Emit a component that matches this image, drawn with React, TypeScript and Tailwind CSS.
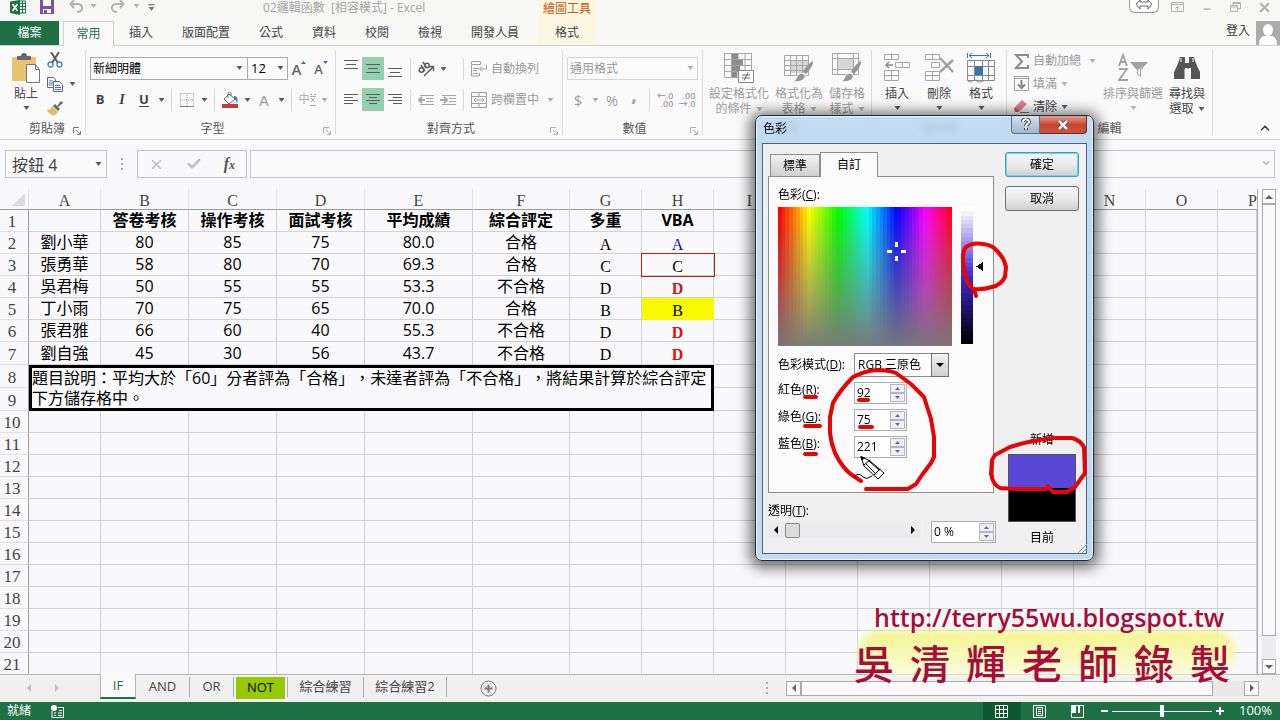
import { ReactNode, useState } from "react";
import { ChevronUp, ChevronDown, Check, X, Minus } from "lucide-react";

interface SheetRow {
    name: string;
    scores: string[];
    result: string;
    multi: string;
    vba: string;
    vbaClass: string;
}

// the last column takes whatever width is left
const columns = [
    { label: "A", width: "w-[72px]" },
    { label: "B", width: "w-[88px]" },
    { label: "C", width: "w-[88px]" },
    { label: "D", width: "w-[88px]" },
    { label: "E", width: "w-[108px]" },
    { label: "F", width: "w-[97px]" },
    { label: "G", width: "w-[72px]" },
    { label: "H", width: "w-[72px]" },
    { label: "I", width: "w-[72px]" },
    { label: "J", width: "w-[72px]" },
    { label: "K", width: "w-[72px]" },
    { label: "L", width: "w-[72px]" },
    { label: "M", width: "w-[72px]" },
    { label: "N", width: "w-[72px]" },
    { label: "O", width: "w-[72px]" },
    { label: "P", width: "" },
];

const headings = ["", "答卷考核", "操作考核", "面試考核", "平均成績", "綜合評定", "多重", "VBA"];

const rows: SheetRow[] = [
    { name: "劉小華", scores: ["80", "85", "75", "80.0"], result: "合格", multi: "A", vba: "A", vbaClass: "text-[#1a0d99]" },
    { name: "張勇華", scores: ["58", "80", "70", "69.3"], result: "合格", multi: "C", vba: "C", vbaClass: "outline outline-[#c01818]" },
    { name: "吳君梅", scores: ["50", "55", "55", "53.3"], result: "不合格", multi: "D", vba: "D", vbaClass: "font-bold text-[#d81414]" },
    { name: "丁小雨", scores: ["70", "75", "65", "70.0"], result: "合格", multi: "B", vba: "B", vbaClass: "bg-[#f8f800] border-[#f8f800]" },
    { name: "張君雅", scores: ["66", "60", "40", "55.3"], result: "不合格", multi: "D", vba: "D", vbaClass: "font-bold text-[#d81414]" },
    { name: "劉自強", scores: ["45", "30", "56", "43.7"], result: "不合格", multi: "D", vba: "D", vbaClass: "font-bold text-[#d81414]" },
];

const ribbonTabs = ["插入", "版面配置", "公式", "資料", "校閱", "檢視", "開發人員"];

function Caret({ light = false }: { light?: boolean }) {
    return (
        <svg width="7" height="4" viewBox="0 0 7 4" className={light ? "text-[#b0b0b0]" : "text-[#5a5a5a]"}>
            <path d="M0.5 0h6L3.5 4z" fill="currentColor" />
        </svg>
    );
}

function CaretButton({ label, light }: { label: string; light?: boolean }) {
    return (
        <button aria-label={label} className="flex h-[23px] w-3 items-center justify-center">
            <Caret light={light} />
        </button>
    );
}

function IconButton({ label, active = false, children }: { label: string; active?: boolean; children: ReactNode }) {
    return (
        <button
            aria-label={label}
            className={`flex h-[23px] w-[22px] shrink-0 items-center justify-center ${active ? "bg-[#94cfae]" : ""}`}
        >
            {children}
        </button>
    );
}

function Divider() {
    return <div className="mx-1 h-[22px] w-px bg-[#d8d8da]" />;
}

function Group({ label, width, launcher = "", children }: { label: string; width: string; launcher?: string; children: ReactNode }) {
    return (
        <section className={`flex shrink-0 flex-col border-r border-[#dcdcde] ${width}`}>
            <div className="h-[72px]">{children}</div>
            <div className="flex h-[14px] items-end">
                <span className="flex-1 text-center leading-3 text-[#555]">{label}</span>
                {launcher && (
                    <button aria-label={label + "設定"} className={`-ml-4 mr-1 ${launcher}`}>
                        <svg width="8" height="8" viewBox="0 0 8 8" fill="none" stroke="currentColor">
                            <path d="M0.5 6V0.5H6M3 3l4 4M7.5 4v3.500H4" />
                        </svg>
                    </button>
                )}
            </div>
        </section>
    );
}

function BigButton({ icon, lines, light = false, dropdown = true }: { icon: ReactNode; lines: string[]; light?: boolean; dropdown?: boolean }) {
    return (
        <button className={`flex min-w-[42px] flex-col items-center px-[3px] ${light ? "text-[#9a9a9a]" : "text-[#444]"}`}>
            <span className="flex h-[36px] items-center">{icon}</span>
            {lines.map((line, i) => (
                <span key={line} className="flex h-[15px] items-center gap-1 whitespace-nowrap">
                    {line}
                    {i === 1 && dropdown && <Caret light={light} />}
                </span>
            ))}
            {lines.length === 1 && (
                <span className="flex h-[14px] items-center">
                    <Caret light={light} />
                </span>
            )}
        </button>
    );
}

function AlignIcon({ lines }: { lines: [number, number, number][] }) {
    return (
        <svg width="14" height="17" viewBox="0 0 14 17" stroke="#5c5c5c">
            {lines.map(([x1, x2, y]) => (
                <path key={y} d={`M${x1} ${y}.5H${x2}`} />
            ))}
        </svg>
    );
}

function TableIcon({ children }: { children: ReactNode }) {
    return (
        <svg width="30" height="30" viewBox="0 0 30 30" fill="none" stroke="#a6a6a6">
            {children}
        </svg>
    );
}

function Brush() {
    return (
        <g stroke="none" fill="#969696">
            <path d="M29 8c1 3-4 10-7 13l-3-2c2-4 6-9 10-11z" />
            <path d="M18 20l3 2c1 4-3 7-12 7 4-2 3-8 9-9z" stroke="#fafafa" />
        </g>
    );
}

function Header() {
    return (
        <header className="border-b border-[#d0d0d0] bg-[#f7f7f5] text-[#444]">
            <div className="flex h-[21px]">
                <div className="flex w-[263px] shrink-0 items-start">
                    <svg className="ml-[10px]" width="16" height="15" viewBox="0 0 16 15">
                        <path d="M9 1h6.500v12H9" fill="#fff" stroke="#1f7244" />
                        <path d="M10 3.500h5M10 6.500h5M10 9.500h5M12.500 1v12" stroke="#1f7244" />
                        <path d="M0 1.500L10 0v15L0 13z" fill="#1f7244" />
                        <path d="M2.500 4l5 7M7.500 4l-5 7" stroke="#fff" strokeWidth="1.600" />
                    </svg>
                    <button aria-label="儲存檔案" className="ml-[14px]">
                        <svg width="14" height="14" viewBox="0 0 14 14">
                            <path d="M0 0h14v14H0z" fill="#8250a0" />
                            <path d="M3 0h8v6H3zM3 9h8v4H3z" fill="#fff" />
                            <path d="M4 10h3v3H4z" fill="#8250a0" />
                        </svg>
                    </button>
                    <button aria-label="復原" className="ml-[15px]">
                        <svg width="15" height="13" viewBox="0 0 15 13" fill="none" stroke="#b3b3b3" strokeWidth="2">
                            <path d="M5 0L1.500 4 5 8M2 4h7c6 1 5 8-1 8" />
                        </svg>
                    </button>
                    <span className="ml-[6px] mt-1"><Caret light /></span>
                    <button aria-label="取消復原" className="ml-[13px]">
                        <svg width="15" height="13" viewBox="0 0 15 13" fill="none" stroke="#b3b3b3" strokeWidth="2">
                            <path d="M10 0l3.500 4L10 8M13 4H6C0 5 1 12 7 12" />
                        </svg>
                    </button>
                    <span className="ml-2 mt-1"><Caret light /></span>
                    <button aria-label="自訂快速存取工具列" className="ml-2 mt-1">
                        <svg width="7" height="7" viewBox="0 0 7 7" fill="#777">
                            <path d="M0.500 0h6v1.200h-6zM0.500 3h6l-3 4z" />
                        </svg>
                    </button>
                </div>
                <h1 className="w-[275px] shrink-0 whitespace-pre text-xs leading-4 text-[#a5a5a5]">02邏輯函數  [相容模式] - Excel</h1>
                <div className="w-[58px] shrink-0 bg-[#faf7e0] text-center leading-[18px] text-[#c55a11]">繪圖工具</div>
                <div className="ml-auto flex items-start text-[#b3b3b3]">
                    <button aria-label="遠端連線" className="mr-3 flex h-[13px] w-[30px] items-start justify-center rounded-b-md border border-t-0 border-[#999] bg-white">
                        <svg width="18" height="10" viewBox="0 0 18 10" fill="none" stroke="#666">
                            <path d="M5 0L1 4l4 5V6h8v3l4-5-4-4v2H5z" />
                        </svg>
                    </button>
                    <button aria-label="功能區顯示選項" className="mr-[18px] mt-[2px]">
                        <svg width="13" height="10" viewBox="0 0 13 10" fill="none" stroke="currentColor">
                            <path d="M0.500 0.500h12v9H0.500zM0.500 2.500h12M6.500 9V4.500M4.500 6.500l2-2 2 2" />
                        </svg>
                    </button>
                    <button aria-label="最小化" className="mr-[18px] mt-1"><Minus size={10} strokeWidth={4} /></button>
                    <button aria-label="還原視窗" className="mr-4 mt-[2px]">
                        <svg width="11" height="10" viewBox="0 0 11 10" fill="none" stroke="currentColor">
                            <path d="M0.500 3.500h7v6h-7zM0.500 5h7M3 3V0.500h7.500v6H8M3 1.500h7" />
                        </svg>
                    </button>
                    <button aria-label="關閉" className="mr-2 mt-0"><X size={15} strokeWidth={3.500} /></button>
                </div>
            </div>
            <div className="flex h-6 items-stretch">
                <button className="w-[59px] shrink-0 bg-[#1e7145] text-white">檔案</button>
                <button className="-mb-px ml-1 w-[51px] shrink-0 border border-b-0 border-[#d0d0d0] bg-[#fafafb] text-[#1e7145]">常用</button>
                <nav className="flex w-[424px] shrink-0 gap-[29px] pl-[15px]">
                    {ribbonTabs.map((tab) => (
                        <button key={tab} className="whitespace-nowrap">{tab}</button>
                    ))}
                </nav>
                <button className="w-[58px] shrink-0 bg-[#faf7e0]">格式</button>
                <div className="ml-auto flex items-center gap-[6px]">
                    <a href="#signin" className="mb-1">登入</a>
                    <svg width="24" height="24" viewBox="0 0 24 24">
                        <path d="M0 0h24v24H0z" fill="#acacac" />
                        <ellipse cx="12" cy="9" rx="5" ry="6" fill="#fff" />
                        <path d="M3 24c0-8 4-9 6-9h6c2 0 6 1 6 9z" fill="#fff" />
                    </svg>
                </div>
            </div>
        </header>
    );
}

function Ribbon() {
    return (
        <div className="flex h-[94px] overflow-hidden border-b border-[#d0d0d0] bg-[#fafafb] py-1 text-[#444]">
            <Group label="剪貼簿" width="w-[86px] pl-[5px]" launcher="text-[#777]">
                <div className="flex">
                    <BigButton
                        lines={["貼上"]}
                        icon={
                            <svg width="30" height="30" viewBox="0 0 30 30">
                                <path d="M1 4h24v24H1z" fill="#e8c374" />
                                <path d="M6 3h4c0-4 6-4 6 0h4v4H6z" fill="#66666a" />
                                <path d="M15.500 11.500h9l4 5v13h-13z" fill="#fff" stroke="#777" />
                                <path d="M24.500 11.500v5h4" fill="none" stroke="#777" />
                            </svg>
                        }
                    />
                    <div className="flex flex-col gap-2 pt-[2px]">
                        <button aria-label="剪下" className="h-4 w-4">
                            <svg width="16" height="16" viewBox="0 0 16 16" fill="none">
                                <path d="M4 0l7 11M12 0L5 11" stroke="#5c5c5c" strokeWidth="2" />
                                <circle cx="3.500" cy="12.500" r="2.500" stroke="#4a7cb5" strokeWidth="1.300" />
                                <circle cx="12.500" cy="12.500" r="2.500" stroke="#4a7cb5" strokeWidth="1.300" />
                            </svg>
                        </button>
                        <button aria-label="複製" className="flex h-4 items-center gap-[6px]">
                            <svg width="16" height="15" viewBox="0 0 16 15" fill="#fff" stroke="#666">
                                <path d="M0.500 0.500h6l2 2v8h-8z" />
                                <path d="M2 4h4M2 6h4M2 8h4" stroke="#4a7cb5" />
                                <path d="M6.500 4.500h6l3 3v7h-9z" />
                                <path d="M8 8.500h5M8 10.500h6M8 12.500h6" stroke="#4a7cb5" />
                            </svg>
                            <Caret />
                        </button>
                        <button aria-label="複製格式" className="h-4 w-4">
                            <svg width="16" height="15" viewBox="0 0 16 15">
                                <path d="M14 0l2 2-5 4-1-1z" fill="#666" />
                                <path d="M8 3l5 5-2 2-5-5z" fill="#666" />
                                <path d="M5 5l6 6c-2 3-5 4-6 3-2-1-5-4-5-5 2 0 4-1 5-4z" fill="#e3b868" />
                            </svg>
                        </button>
                    </div>
                </div>
            </Group>

            <Group label="字型" width="w-[250px]" launcher="text-[#b0b0b0]">
                <div className="flex pl-1 pt-[7px]">
                    <label className="relative block w-[158px]">
                        <select aria-label="字型" className="h-[23px] w-full appearance-none border border-[#ababab] bg-[#fcfcfd] pl-[2px] text-xs text-black">
                            <option>新細明體</option>
                        </select>
                        <span className="pointer-events-none absolute right-[5px] top-[9px]"><Caret /></span>
                    </label>
                    <label className="relative -ml-px block w-[41px]">
                        <select aria-label="字型大小" className="h-[23px] w-full appearance-none border border-[#ababab] bg-[#fcfcfd] pl-[3px] text-[13px] text-black">
                            <option>12</option>
                        </select>
                        <span className="pointer-events-none absolute right-1 top-[9px]"><Caret /></span>
                    </label>
                    <IconButton label="放大字型">
                        <span className="text-[15px] font-semibold leading-4 text-[#666]">A</span>
                        <svg className="mb-3" width="5" height="3" viewBox="0 0 5 3"><path d="M0 3h5L2.500 0z" fill="#3a74b0" /></svg>
                    </IconButton>
                    <IconButton label="縮小字型">
                        <span className="text-[13px] font-semibold leading-4 text-[#666]">A</span>
                        <svg className="mb-3" width="5" height="3" viewBox="0 0 5 3"><path d="M0 0h5L2.500 3z" fill="#3a74b0" /></svg>
                    </IconButton>
                </div>
                <div className="flex items-center pl-[3px] pt-2">
                    <IconButton label="粗體"><b className="text-[13px]">B</b></IconButton>
                    <IconButton label="斜體"><i className="font-['Liberation_Serif',serif] text-sm font-bold">I</i></IconButton>
                    <IconButton label="底線"><span className="text-[13px] font-bold underline underline-offset-2">U</span></IconButton>
                    <CaretButton label="底線樣式" />
                    <Divider />
                    <IconButton label="框線">
                        <svg width="14" height="14" viewBox="0 0 14 14" fill="none" stroke="#a0a0a0">
                            <path d="M0.500 0.500h13v13M0.500 0.500v13M7 0v13M0 7h14" strokeDasharray="1 1" />
                            <path d="M0 13.500h14" stroke="#888" />
                        </svg>
                    </IconButton>
                    <CaretButton label="框線樣式" />
                    <Divider />
                    <IconButton label="填滿色彩">
                        <svg width="17" height="16" viewBox="0 0 17 16">
                            <path d="M7 2l6 5-6 5-5-5z" fill="#fff" stroke="#666" />
                            <path d="M6 6V1.500C6-.5 9-.5 9 1.500V4" fill="none" stroke="#666" />
                            <path d="M12 4c4 0 4 4 3 7-1-2-1-4-3-4z" fill="#3a74b0" />
                            <path d="M0 12h16v4H0z" fill="#c33c3c" />
                        </svg>
                    </IconButton>
                    <CaretButton label="填滿色彩選項" />
                    <IconButton label="字型色彩"><span className="text-[15px] font-semibold leading-4 text-[#a8a8a8]">A</span></IconButton>
                    <CaretButton label="字型色彩選項" />
                    <Divider />
                    <IconButton label="顯示注音標示欄位">
                        <span className="text-[11px] text-[#a8a8a8]">中</span>
                        <svg width="6" height="13" viewBox="0 0 6 13" fill="none" stroke="#a8a8a8">
                            <path d="M0 1.500h2M4 1.500h2M0 3.500h6M1 5l4 4M5 5L1 9M0 12.500h6" />
                        </svg>
                    </IconButton>
                    <CaretButton label="注音選項" light />
                </div>
            </Group>

            <Group label="對齊方式" width="w-[227px]" launcher="text-[#b0b0b0]">
                <div className="flex items-center pl-1 pt-[7px]">
                    <IconButton label="靠上對齊"><AlignIcon lines={[[0, 14, 0], [2, 12, 4], [0, 14, 8]]} /></IconButton>
                    <IconButton label="置中對齊" active><AlignIcon lines={[[0, 14, 4], [2, 12, 8], [0, 14, 12]]} /></IconButton>
                    <IconButton label="靠下對齊"><AlignIcon lines={[[0, 14, 8], [2, 12, 12], [0, 14, 16]]} /></IconButton>
                    <Divider />
                    <div className="flex w-11">
                        <IconButton label="方向">
                            <svg width="17" height="16" viewBox="0 0 17 16" fill="none" stroke="#5c5c5c" strokeWidth="1.500">
                                <path d="M6 15L15 6M15.500 10V5.500H11" />
                                <circle cx="3.500" cy="9" r="2.200" />
                                <circle cx="9" cy="4.500" r="2.200" />
                                <path d="M3 4l4 6M5 1l3 5" />
                            </svg>
                        </IconButton>
                        <CaretButton label="方向選項" />
                    </div>
                    <Divider />
                    <button className="flex items-center gap-1 pl-[3px] text-[#9a9a9a]">
                        <svg width="16" height="16" viewBox="0 0 16 16" fill="none" stroke="#a0a0a0">
                            <path d="M0.500 0.500h9v3h-9zM0.500 5v10h8v-3M2 7.500h6M2 9.500h4M2 12.500h5M15.500 4v4H9M11 5.500L8.500 8l2.500 2.500M0.500 4v2" />
                        </svg>
                        自動換列
                    </button>
                </div>
                <div className="flex items-center pl-1 pt-2">
                    <IconButton label="靠左對齊"><AlignIcon lines={[[0, 14, 3], [0, 9, 6], [0, 14, 9], [0, 9, 12]]} /></IconButton>
                    <IconButton label="置中" active><AlignIcon lines={[[0, 14, 3], [3, 11, 6], [0, 14, 9], [3, 11, 12]]} /></IconButton>
                    <IconButton label="靠右對齊"><AlignIcon lines={[[0, 14, 3], [5, 14, 6], [0, 14, 9], [5, 14, 12]]} /></IconButton>
                    <Divider />
                    <IconButton label="減少縮排">
                        <svg width="16" height="12" viewBox="0 0 16 12" fill="none" stroke="#a8a8a8">
                            <path d="M2 1.500h14M8 4.500h7M8 7.500h7M2 10.500h14" />
                            <path d="M4 3L1 6l3 3M1 6h6" strokeWidth="2" />
                        </svg>
                    </IconButton>
                    <IconButton label="增加縮排">
                        <svg width="16" height="12" viewBox="0 0 16 12" fill="none" stroke="#a8a8a8">
                            <path d="M2 1.500h14M9 4.500h7M9 7.500h7M2 10.500h14" />
                            <path d="M4 3l3 3-3 3M0 6h7" strokeWidth="2" />
                        </svg>
                    </IconButton>
                    <Divider />
                    <button className="flex items-center gap-1 pl-[3px] text-[#9a9a9a]">
                        <svg width="16" height="16" viewBox="0 0 16 16" fill="none" stroke="#a0a0a0">
                            <path d="M0.500 0.500h15v15h-15zM0.500 4.500h15M0.500 11.500h15M8 0v4M8 12v4M3 8h10M5 6L3 8l2 2M11 6l2 2-2 2" />
                        </svg>
                        跨欄置中
                    </button>
                    <span className="ml-2"><Caret light /></span>
                </div>
            </Group>

            <Group label="數值" width="w-[140px]" launcher="text-[#b0b0b0]">
                <label className="relative mx-1 block pt-[7px]">
                    <select aria-label="數值格式" className="h-[23px] w-full appearance-none border border-[#d4d4d6] bg-[#fcfcfd] pl-[2px] text-xs text-[#9a9a9a]">
                        <option>通用格式</option>
                    </select>
                    <span className="pointer-events-none absolute right-1 top-4"><Caret light /></span>
                </label>
                <div className="flex items-center pl-1 pt-2 text-[#a0a0a0]">
                    <IconButton label="會計數字格式"><span className="text-[15px] leading-4">$</span></IconButton>
                    <CaretButton label="貨幣選項" light />
                    <IconButton label="百分比樣式"><span className="text-[15px] leading-4">%</span></IconButton>
                    <IconButton label="千分位樣式"><span className="pb-3 text-xl font-bold leading-4">,</span></IconButton>
                    <Divider />
                    <IconButton label="增加小數位數">
                        <span className="text-right text-[9px] font-semibold leading-2">←.0<br />.00</span>
                    </IconButton>
                    <IconButton label="減少小數位數">
                        <span className="text-right text-[9px] font-semibold leading-2">.00<br />→.0</span>
                    </IconButton>
                </div>
            </Group>

            <Group label="樣式" width="w-[169px]">
                <div className="flex pl-[3px]">
                    <BigButton
                        light
                        lines={["設定格式化", "的條件"]}
                        icon={
                            <TableIcon>
                                <path d="M0.500 0.500h27v24h-27zM0.500 6.500h27M0.500 12.500h27M0.500 18.500h27M7.500 0v24M14 0v24M21 0v24" />
                                <path d="M8 1h6v5H8zM8 7h11v5H8zM8 13h8v5H8zM8 19h5v5H8z" fill="#8c8c8c" stroke="none" />
                                <path d="M14.500 17.500h15v12h-15z" fill="#fff" stroke="#888" />
                                <path d="M18 22h8M18 25h8M24 19.500l-4 8" stroke="#666" />
                            </TableIcon>
                        }
                    />
                    <BigButton
                        light
                        lines={["格式化為", "表格"]}
                        icon={
                            <TableIcon>
                                <path d="M7 8h18v12H7z" fill="#d6d6d6" stroke="none" />
                                <path d="M0.500 2.500h24v20h-24zM0.500 7.500h24M0.500 12.500h24M0.500 17.500h24M6.500 2v20M12.500 2v20M18.500 2v20" />
                                <Brush />
                            </TableIcon>
                        }
                    />
                    <BigButton
                        light
                        lines={["儲存格", "樣式"]}
                        icon={
                            <TableIcon>
                                <path d="M0.500 0.500h26v21h-26zM0.500 5.500h26M0.500 16.500h26M5.500 0v21M21.500 0v21" />
                                <path d="M6 6h15v10H6z" fill="#d6d6d6" stroke="none" />
                                <Brush />
                            </TableIcon>
                        }
                    />
                </div>
            </Group>

            <Group label="儲存格" width="w-[135px]">
                <div className="flex pl-1">
                    <BigButton
                        lines={["插入"]}
                        icon={
                            <TableIcon>
                                <path d="M2.500 1.500h14v5h-14zM9.500 1v5M13.500 9.500h14v5h-14zM20.500 9v5M2.500 17.500h14v10h-14zM2.500 22.500h14M9.500 17v10" />
                                <path d="M4 12h7M7 9l-3 3 3 3" stroke="#888" strokeWidth="1.500" />
                            </TableIcon>
                        }
                    />
                    <BigButton
                        lines={["刪除"]}
                        icon={
                            <TableIcon>
                                <path d="M1.500 1.500h14v5h-14zM8.500 1v5M7.500 9.500h8v5h-8zM1.500 18.500h14v9h-14zM1.500 22.500h14M8.500 18v9" />
                                <path d="M16 5l13 14M29 7L16 19" stroke="#a0a0a0" strokeWidth="2.500" />
                            </TableIcon>
                        }
                    />
                    <BigButton
                        lines={["格式"]}
                        icon={
                            <TableIcon>
                                <path d="M1.500 0v5M24.500 0v5M3 2.500h20M6 0L3 2.500 6 5M20 0l3 2.500L20 5" stroke="#3a74b0" />
                                <path d="M1.500 7.500h27v20h-27zM1.500 13.500h27M1.500 22.500h27M8.500 7v21M16.500 7v21M22.500 7v21" stroke="#888" />
                                <path d="M9 13h8v9H9z" fill="#3a74b0" stroke="none" />
                                <path d="M2 28c4 3 5-3 9 0s5-1 7 0" stroke="#888" />
                            </TableIcon>
                        }
                    />
                </div>
            </Group>

            <Group label="編輯" width="w-[206px]">
                <div className="flex">
                    <div className="flex w-[93px] flex-col pl-[7px]">
                        <button className="flex h-[22px] items-center gap-1 whitespace-nowrap text-[#9a9a9a]">
                            <svg width="15" height="15" viewBox="0 0 15 15" fill="none" stroke="#8c8c8c" strokeWidth="2">
                                <path d="M14 4V1H2l6 6.500L2 14h12v-3" />
                            </svg>
                            自動加總
                            <span className="ml-1"><Caret light /></span>
                        </button>
                        <button className="flex h-[23px] items-center gap-1 text-[#9a9a9a]">
                            <svg width="15" height="15" viewBox="0 0 15 15" fill="none" stroke="#a0a0a0">
                                <path d="M0.500 0.500h14v14H0.500zM0.500 2.500h14" />
                                <path d="M7.500 4v8M4 8.500L7.500 12 11 8.500" stroke="#888" strokeWidth="2" />
                            </svg>
                            填滿
                            <Caret light />
                        </button>
                        <button className="flex h-[23px] items-center gap-1">
                            <svg width="15" height="13" viewBox="0 0 15 13">
                                <path d="M8 0l5 4-7 7-5-4z" fill="#dd7f92" />
                                <path d="M1 7l5 4-2 1H1L0 9z" fill="#c9556e" />
                                <path d="M6 12.500h9" stroke="#777" />
                            </svg>
                            清除
                            <Caret />
                        </button>
                    </div>
                    <BigButton
                        light
                        lines={["排序與篩選"]}
                        icon={
                            <svg width="30" height="30" viewBox="0 0 30 30" fill="none" stroke="#a0a0a0" strokeWidth="1.800">
                                <path d="M1 13L5 2l4 11M2.500 9h5M1 16h8L1 27h9" />
                                <path d="M12 9h18l-7 8v7l-4-3v-4z" fill="#a0a0a0" stroke="none" />
                                <path d="M20 17v4l2 1v-6l4-4" fill="#fff" stroke="none" />
                            </svg>
                        }
                    />
                    <BigButton
                        lines={["尋找與", "選取"]}
                        icon={
                            <svg width="26" height="26" viewBox="0 0 26 26" fill="#555">
                                <path d="M6 2h5v6h4V2h5l1 4 3 7 2 4v7h-9V13h-2v11h-2V13H11v11H0v-7l2-4 3-7z" />
                                <path d="M11 14h4v11h-4zM7 3v4M19 3v4" fill="#fafafb" stroke="#fafafb" />
                            </svg>
                        }
                    />
                </div>
            </Group>
            <button aria-label="摺疊功能區" className="ml-auto mr-2 mt-auto"><ChevronUp size={14} strokeWidth={3} /></button>
        </div>
    );
}

function FormulaBar() {
    return (
        <div className="flex bg-[#f9f9fb] pb-[11px] pl-[5px] pr-[5px] pt-[10px]">
            <label className="relative block w-[102px] shrink-0">
                <input aria-label="名稱方塊" defaultValue="按鈕 4" className="h-7 w-full border border-[#c4c4c6] bg-[#fafafb] pl-[6px] text-base text-[#444] outline-none" />
                <span className="pointer-events-none absolute right-[5px] top-3"><Caret /></span>
            </label>
            <div className="flex w-[30px] shrink-0 flex-col items-center justify-center gap-[3px]">
                <span className="size-[2px] bg-[#aaa]" />
                <span className="size-[2px] bg-[#aaa]" />
                <span className="size-[2px] bg-[#aaa]" />
            </div>
            <div className="flex h-7 w-[110px] shrink-0 items-center justify-around border border-[#c4c4c6] text-[#bbb]">
                <button aria-label="取消輸入"><X size={15} strokeWidth={2.500} /></button>
                <button aria-label="輸入"><Check size={16} strokeWidth={3.500} /></button>
                <button aria-label="插入函數" className="font-['Liberation_Serif',serif] text-base font-bold italic leading-4 text-[#555]">
                    f<span className="text-xs">x</span>
                </button>
            </div>
            <label className="relative ml-[3px] block flex-1">
                <input aria-label="資料編輯列" className="h-7 w-full border border-[#c4c4c6] bg-[#fafafb] pl-2 outline-none" />
                <ChevronDown size={10} strokeWidth={4} className="pointer-events-none absolute right-1 top-2 text-[#bbb]" />
            </label>
        </div>
    );
}

const rowHead = "border-r border-b border-r-[#9c9c9c] border-b-[#e0e0e2] p-0 pr-1 pt-[2px] text-center align-middle font-['Liberation_Serif',serif] text-[17px] font-normal leading-[17px] text-[#444]";
const cell = "border-r border-b border-[#d0d0d4] p-0 pb-px text-center text-base leading-5 text-black";
const serifCell = "border-r border-b border-[#d0d0d4] p-0 pt-1 text-center font-['Liberation_Serif',serif] text-base leading-4";

function EmptyCells({ from }: { from: number }) {
    return (
        <>
            {columns.slice(from).map((c) => (
                <td key={c.label} className="border-b border-r border-[#d0d0d4] p-0" />
            ))}
        </>
    );
}

function Sheet() {
    return (
        <table className="w-full min-w-[1256px] table-fixed border-separate border-spacing-0">
            <colgroup>
                <col className="w-[29px]" />
                {columns.map((c) => (
                    <col key={c.label} className={c.width} />
                ))}
            </colgroup>
            <thead>
                <tr className="h-[21px]">
                    <th className="border-b border-r border-[#e0e0e2] border-b-[#9c9c9c] p-0">
                        <svg className="ml-3" width="13" height="13" viewBox="0 0 13 13"><path d="M13 0v13H0z" fill="#dcdcdc" /></svg>
                    </th>
                    {columns.map((c) => (
                        <th key={c.label} className="border-b border-r border-[#e0e0e2] border-b-[#9c9c9c] p-0 pt-1 text-center font-['Liberation_Serif',serif] text-base font-normal leading-4 text-[#444] last:border-r-0 last:text-right">
                            {c.label}
                        </th>
                    ))}
                </tr>
            </thead>
            <tbody>
                <tr className="h-[22px]">
                    <th className={rowHead}>1</th>
                    {headings.map((h, i) => (
                        <td key={i} className={`${cell} font-bold`}>{h}</td>
                    ))}
                    <EmptyCells from={8} />
                </tr>
                {rows.map((row, i) => (
                    <tr key={row.name} className={i === 5 ? "h-[23px]" : "h-[22px]"}>
                        <th className={rowHead}>{i + 2}</th>
                        <td className={cell}>{row.name}</td>
                        {row.scores.map((s, j) => (
                            <td key={j} className={cell}>{s}</td>
                        ))}
                        <td className={cell}>{row.result}</td>
                        <td className={serifCell}>{row.multi}</td>
                        <td className={`${serifCell} ${row.vbaClass}`}>{row.vba}</td>
                        <EmptyCells from={8} />
                    </tr>
                ))}
                <tr className="h-[23px]">
                    <th className={rowHead}>8</th>
                    <td colSpan={8} rowSpan={2} className="border-[3px] border-black p-0 align-top text-base leading-5 text-black [text-spacing-trim:space-all]">
                        題目說明：平均大於「60」分者評為「合格」，未達者評為「不合格」，將結果計算於綜合評定下方儲存格中。
                    </td>
                    <EmptyCells from={8} />
                </tr>
                <tr className="h-[23px]">
                    <th className={rowHead}>9</th>
                    <EmptyCells from={8} />
                </tr>
                {Array.from({ length: 12 }, (_, i) => (
                    <tr key={i} className="h-[22px]">
                        <th className={rowHead}>{i + 10}</th>
                        <EmptyCells from={0} />
                    </tr>
                ))}
            </tbody>
        </table>
    );
}

function Arrow({ direction }: { direction: "up" | "down" | "left" | "right" }) {
    const paths = {
        up: "M0 6h8L4 2z",
        down: "M0 2h8L4 6z",
        left: "M6 0v8L2 4z",
        right: "M2 0v8l4-4z",
    };
    return (
        <svg width="8" height="8" viewBox="0 0 8 8" fill="currentColor"><path d={paths[direction]} /></svg>
    );
}

function SheetTabs() {
    return (
        <div className="flex h-7 items-start border-t border-[#b4b4b4] bg-[#f0f0f0] text-[13px] text-[#444]">
            <div className="flex h-[26px] w-[100px] shrink-0 items-center pl-[25px] text-[#bbb]">
                <button aria-label="上一張工作表"><Arrow direction="left" /></button>
                <button aria-label="下一張工作表" className="ml-5"><Arrow direction="right" /></button>
            </div>
            <button className="-mt-px h-[25px] w-9 shrink-0 border-x border-b-2 border-x-[#b4b4b4] border-b-[#1e7145] bg-[#fafafb] text-[#1e7145]">IF</button>
            <button className="mt-[2px] h-5 w-[54px] shrink-0 border-r border-[#aaa]">AND</button>
            <button className="mt-[2px] h-5 w-11 shrink-0 border-r border-[#aaa]">OR</button>
            <button className="mx-[2px] mt-[2px] h-[22px] w-[49px] shrink-0 bg-[#98c800] text-black">NOT</button>
            <button className="mt-[2px] h-5 w-[77px] shrink-0 border-x border-[#aaa] text-[13px]">綜合練習</button>
            <button className="mt-[2px] h-5 w-[83px] shrink-0 border-r border-[#aaa] text-[13px]">綜合練習2</button>
            <button aria-label="新增工作表" className="ml-[33px] mt-[5px]">
                <svg width="17" height="17" viewBox="0 0 17 17" fill="none" stroke="#777">
                    <circle cx="8.500" cy="8.500" r="7.500" />
                    <path d="M8.500 4.500v8M4.500 8.500h8" strokeWidth="2" />
                </svg>
            </button>
            <div className="ml-auto mr-[21px] flex h-[26px] w-[493px] shrink items-center">
                <div className="flex w-5 shrink-0 flex-col gap-[3px]">
                    <span className="size-[2px] bg-[#aaa]" />
                    <span className="size-[2px] bg-[#aaa]" />
                    <span className="size-[2px] bg-[#aaa]" />
                </div>
                <button aria-label="向左捲動" className="flex h-[15px] w-[15px] items-center justify-center border border-[#aaa] bg-[#fafafa] text-[#666]"><Arrow direction="left" /></button>
                <div className="flex h-[15px] flex-1 bg-[#e8e8e8]">
                    <div className="w-[93%] border border-[#aaa] bg-[#fafafb]" />
                </div>
                <button aria-label="向右捲動" className="flex h-[15px] w-[15px] items-center justify-center border border-[#aaa] bg-[#fafafa] text-[#666]"><Arrow direction="right" /></button>
            </div>
        </div>
    );
}

function StatusBar() {
    return (
        <footer className="flex h-[18px] items-center bg-[#1e7145] text-xs text-white">
            <span className="ml-[7px]">就緒</span>
            <svg className="ml-5" width="13" height="13" viewBox="0 0 13 13" fill="none" stroke="#fff">
                <path d="M1 6v6.500h11.500v-10H7M3 8h2M7 8h4M3 10.500h2M7 10.500h4M8 5.500h3" />
                <circle cx="3" cy="3" r="3" fill="#fff" stroke="none" />
            </svg>
            <div className="ml-auto flex h-full items-center">
                <button aria-label="標準模式" className="flex h-full w-[38px] items-center justify-center bg-[#0d5a32]">
                    <svg width="13" height="13" viewBox="0 0 13 13" fill="none" stroke="#fff"><path d="M0.500 0.500h12v12h-12zM4.500 0v13M8.500 0v13M0 4.500h13M0 8.500h13" /></svg>
                </button>
                <button aria-label="整頁模式" className="flex w-[38px] justify-center">
                    <svg width="13" height="13" viewBox="0 0 13 13" fill="none" stroke="#fff"><path d="M0.500 0.500h12v12h-12zM3.500 2.500h6v8h-6zM5 4.500h3M5 6.500h3M5 8.500h3" /></svg>
                </button>
                <button aria-label="分頁預覽" className="flex w-[38px] justify-center">
                    <svg width="13" height="13" viewBox="0 0 13 13" fill="none" stroke="#fff"><path d="M0.500 0.500h12v12h-12z" /><path d="M1 1h4v7H1zM7 1h2v7H7z" fill="#fff" stroke="none" /></svg>
                </button>
                <button aria-label="縮小" className="ml-1 h-[2px] w-[7px] bg-white" />
                <input
                    aria-label="顯示比例"
                    type="range"
                    defaultValue={50}
                    className="mx-1 h-3 w-[100px] appearance-none bg-[linear-gradient(#fff,#fff)] bg-[length:100%_1px] bg-center bg-no-repeat [&::-webkit-slider-thumb]:h-3 [&::-webkit-slider-thumb]:w-1 [&::-webkit-slider-thumb]:appearance-none [&::-webkit-slider-thumb]:bg-white"
                />
                <button aria-label="放大">
                    <svg width="8" height="8" viewBox="0 0 8 8" stroke="#fff" strokeWidth="2"><path d="M4 0v8M0 4h8" /></svg>
                </button>
                <span className="ml-[15px] mr-2 text-[13px]">100%</span>
            </div>
        </footer>
    );
}

function Spinner({ id, value, onChange, className }: { id: string; value: string; onChange: (v: string) => void; className: string }) {
    const step = (by: number) => onChange(value.replace(/\d+/, (n) => String(Math.max(0, Number(n) + by))));
    return (
        <div className={`flex h-[22px] border border-[#aaaeb4] bg-white p-px ${className}`}>
            <input id={id} value={value} onChange={(e) => onChange(e.target.value)} className="min-w-0 flex-1 bg-transparent pl-px text-xs text-black outline-none" />
            <div className="flex w-[15px] flex-col">
                <button aria-label="增加" onClick={() => step(1)} className="flex flex-1 items-center justify-center border border-[#b4b6bc] bg-[#f0f0f2]">
                    <svg width="5" height="3" viewBox="0 0 5 3"><path d="M0 3h5L2.500 0z" fill="#6068a8" /></svg>
                </button>
                <button aria-label="減少" onClick={() => step(-1)} className="flex flex-1 items-center justify-center border border-[#b4b6bc] bg-[#f0f0f2]">
                    <svg width="5" height="3" viewBox="0 0 5 3"><path d="M0 0h5L2.500 3z" fill="#6068a8" /></svg>
                </button>
            </div>
        </div>
    );
}

function ColorMap() {
    const bands = 48;
    return (
        <svg width="174" height="139" viewBox="0 0 174 139" shapeRendering="crispEdges">
            <defs>
                <linearGradient id="fade" x1="0" y1="0" x2="0" y2="1">
                    <stop offset="0" stopColor="#808080" stopOpacity="0" />
                    <stop offset="1" stopColor="#787878" stopOpacity="0.970" />
                </linearGradient>
            </defs>
            {Array.from({ length: bands }, (_, i) => (
                <rect key={i} x={(i * 174) / bands} width={174 / bands + 1} height="139" fill={`hsl(${(i * 350) / (bands - 1)} 100% 50%)`} />
            ))}
            <rect width="174" height="139" fill="url(#fade)" />
            <path d="M109 44.500h5M123 44.500h5M118.500 35v5M118.500 49v5" stroke="#fff" strokeWidth="3" />
        </svg>
    );
}

function LuminanceBar() {
    const steps = 32;
    return (
        <svg width="24" height="137" viewBox="0 0 24 137" shapeRendering="crispEdges">
            {Array.from({ length: steps }, (_, i) => (
                <rect key={i} y={(i * 137) / steps} width="12" height={137 / steps} fill={`hsl(247 68% ${100 - (i * 100) / (steps - 1)}%)`} />
            ))}
            <path d="M22 55v9l-7-4.500z" fill="#000" />
        </svg>
    );
}

const channels = [
    { id: "red", label: "紅色", key: "R" },
    { id: "green", label: "綠色", key: "G" },
    { id: "blue", label: "藍色", key: "B" },
];

const dialogButton = "h-[25px] w-full rounded-[3px] border text-xs text-black bg-gradient-to-b from-[#f4f4f4] via-[#ebebeb] to-[#cfcfcf]";

function ColorDialog() {
    const [values, setValues] = useState<string[]>(["92", "75", "221"]);
    const [opacity, setOpacity] = useState("0 %");

    return (
        <div
            role="dialog"
            aria-label="色彩"
            className="absolute left-[755px] top-[115px] w-[339px] rounded-[7px] border border-[#202a36] bg-[#b9d6f2]/85 px-[6px] pb-[6px] text-black shadow-[0_2px_14px_5px_rgba(0,0,0,0.55)] ring-1 ring-inset ring-[#e8f4ff] backdrop-blur-[3px]"
        >
            <div className="flex h-[27px] items-start justify-between">
                <h2 className="pt-1 pl-px text-xs leading-[18px]">色彩</h2>
                <div className="flex">
                    <button aria-label="說明" className="flex h-[18px] w-[29px] items-center justify-center rounded-bl-[4px] border border-t-0 border-[#5d6f85] bg-gradient-to-b from-[#d4e0ee] to-[#a2b6ce]">
                        <svg width="10" height="13" viewBox="0 0 10 13" fill="none">
                            <path d="M2 4c0-4 6-3 6 0 0 2-3 2-3 4M5 10v2" stroke="#3a4656" strokeWidth="4" />
                            <path d="M2 4c0-4 6-3 6 0 0 2-3 2-3 4M5 9.500v2" stroke="#fff" strokeWidth="2" />
                        </svg>
                    </button>
                    <button aria-label="關閉對話方塊" className="flex h-[18px] w-[47px] items-center justify-center rounded-br-[4px] border border-l-0 border-t-0 border-[#6b2620] bg-gradient-to-b from-[#e0a093] via-[#c8452f] to-[#cf5240]">
                        <svg width="12" height="10" viewBox="0 0 12 10">
                            <path d="M2 1l8 8M10 1L2 9" stroke="#5a3a3a" strokeWidth="4" />
                            <path d="M2 1l8 8M10 1L2 9" stroke="#fff" strokeWidth="2.500" />
                        </svg>
                    </button>
                </div>
            </div>

            <div className="flex h-[411px] justify-between border border-[#4b6184] bg-[#f0f0f0] pl-[5px] pr-[7px] pt-2 text-xs">
                <div className="w-[228px]">
                    <div role="tablist" className="flex h-6 items-end pl-[2px]">
                        <button role="tab" className="h-[22px] w-[50px] border border-b-0 border-[#8c8e94] bg-gradient-to-b from-[#f2f2f2] to-[#cfcfcf]">標準</button>
                        <button role="tab" aria-selected="true" className="relative -mb-px h-[25px] w-[58px] border border-b-0 border-[#8c8e94] bg-[#fbfbfc]">自訂</button>
                    </div>
                    <div className="h-[317px] w-[226px] border border-[#8c8e94] bg-[#fbfbfc] pl-[9px]">
                        <p className="pb-1 pt-[9px] leading-[17px]">色彩(<u>C</u>):</p>
                        <div className="flex gap-[9px]">
                            <ColorMap />
                            <LuminanceBar />
                        </div>
                        <div className="flex items-center pt-[7px]">
                            <label htmlFor="model" className="w-[76px] whitespace-nowrap">色彩模式(<u>D</u>):</label>
                            <div className="relative w-[95px]">
                                <select id="model" className="h-6 w-full appearance-none border border-[#8c8e94] bg-white pl-[3px] text-xs text-black">
                                    <option>RGB 三原色</option>
                                </select>
                                <span className="pointer-events-none absolute right-0 top-0 flex h-6 w-[18px] items-center justify-center border border-[#707070] bg-gradient-to-b from-[#f2f2f2] to-[#cfcfcf] text-black">
                                    <Arrow direction="down" />
                                </span>
                            </div>
                        </div>
                        <div className="flex flex-col gap-[5px] pt-[5px]">
                            {channels.map((c, i) => (
                                <div key={c.id} className="flex items-start">
                                    <label htmlFor={c.id} className="w-[76px] leading-4">{c.label}(<u>{c.key}</u>):</label>
                                    <Spinner
                                        id={c.id}
                                        className="w-[53px]"
                                        value={values[i]}
                                        onChange={(v) => setValues(values.map((old, j) => (j === i ? v : old)))}
                                    />
                                </div>
                            ))}
                        </div>
                    </div>
                    <label htmlFor="alpha" className="block pt-[9px] leading-[18px]">透明(<u>T</u>):</label>
                    <div className="flex items-start justify-between pt-px">
                        <div className="mt-px flex h-4 w-[153px] items-center justify-between bg-[#ececee] px-1">
                            <button aria-label="減少透明度"><Arrow direction="left" /></button>
                            <input
                                aria-label="透明度"
                                type="range"
                                defaultValue={0}
                                className="mx-[5px] h-4 min-w-0 flex-1 appearance-none bg-transparent [&::-webkit-slider-thumb]:size-[15px] [&::-webkit-slider-thumb]:appearance-none [&::-webkit-slider-thumb]:rounded-[2px] [&::-webkit-slider-thumb]:border [&::-webkit-slider-thumb]:border-[#888] [&::-webkit-slider-thumb]:bg-[#dcdcdc]"
                            />
                            <button aria-label="增加透明度"><Arrow direction="right" /></button>
                        </div>
                        <Spinner id="alpha" className="w-[65px]" value={opacity} onChange={setOpacity} />
                    </div>
                </div>

                <div className="flex w-[74px] flex-col items-center">
                    <button className={`${dialogButton} border-[#3c9cc4] ring-1 ring-inset ring-[#7fd0ec]`}>確定</button>
                    <button className={`${dialogButton} mt-[9px] border-[#707070]`}>取消</button>
                    <span className="mt-[220px] leading-[18px]">新增</span>
                    <div className="mt-[5px] h-[68px] w-[68px] border border-[#555] bg-[linear-gradient(#5a47d8_50%,#000_50%)]" />
                    <span className="mt-[7px] leading-[18px]">目前</span>
                </div>
            </div>

            <svg className="pointer-events-none absolute -left-px -top-px" width="339" height="446" viewBox="755 115 339 446" fill="none" stroke="#e80404" strokeWidth="4" strokeLinecap="round" strokeLinejoin="round">
                <path d="M1078 553l9-9M1082 553l5-5" stroke="#999" strokeWidth="1" />
                <path d="M967 280C963 270 961 252 966 247Q973 242 983 244Q993 245 998 252Q1004 258 1006 267L1005 277Q1001 285 992 287Q983 290 973 289Q969 286 967 280M974 289l2 7" />
                <path d="M866 489h42l8-5 6-9 9-12 3-6v-20l-3-18-7-22-13-13-15-11q-8-3-19-3-13 1-24 7-13 13-20 26l-3 14v16q1 10 5 20 8 16 17 22l9 6" />
                <path d="M805 397h11M805 426h15M805 454h11M859 400h9M860 427h12" />
                <path d="M1048 486l5 6h14l8-5 10-14-1-26q-4-7-12-9h-18q-26 3-44 9l-15 8-3 5-1 14q2 11 9 14l16 1h30" />
                <g stroke="#000" strokeWidth="1">
                    <path d="M861 457l3 9 14 13 6-6-14-12z" fill="#fff" />
                    <path d="M864 465l6-5M874 475l6-6M866 464l10 10M869 461l10 9" />
                    <path d="M861 457l1 3 2-2z" fill="#000" />
                    <path d="M854 477q4-5 8-1t8 1l2-1" />
                </g>
            </svg>
        </div>
    );
}

function Watermark() {
    return (
        <div className="absolute bottom-[33px] right-[50px] flex w-[376px] flex-col text-[#a80c38]">
            <a href="http://terry55wu.blogspot.tw" className="relative z-10 pl-5 text-[25px] font-semibold leading-7">http://terry55wu.blogspot.tw</a>
            <div className="absolute left-1 top-7 h-[44px] w-[378px] rounded-[24px] bg-gradient-to-b from-[#f5f58c] to-[#fbfbdc] blur-[3px]" />
            <div className="relative mt-[6px] flex justify-between font-['Noto_Sans_CJK_TC',sans-serif] text-[40px] font-medium leading-[50px]">
                {"吳清輝老師錄製".split("").map((ch) => (
                    <span key={ch}>{ch}</span>
                ))}
            </div>
        </div>
    );
}

export default function App() {
    return (
        <div className="relative flex h-screen flex-col overflow-hidden bg-[#f9f9fb] font-['Open_Sans','Noto_Sans_CJK_TC',sans-serif] text-xs">
            <Header />
            <Ribbon />
            <FormulaBar />
            <main className="flex min-h-0 flex-1">
                <div className="min-w-0 flex-1 overflow-hidden border-r border-[#aaa]">
                    <Sheet />
                </div>
                <div className="mx-1 flex w-[14px] flex-col text-[#666]">
                    <button aria-label="向上捲動" className="flex h-[15px] items-center justify-center border border-[#aaa] bg-[#fafafa]"><Arrow direction="up" /></button>
                    <div className="flex-1 bg-[#ececee]">
                        <div className="h-[95%] border border-[#aaa] bg-[#fafafb]" />
                    </div>
                    <button aria-label="向下捲動" className="flex h-[15px] items-center justify-center border border-[#aaa] bg-[#fafafa]"><Arrow direction="down" /></button>
                </div>
            </main>
            <SheetTabs />
            <StatusBar />
            <ColorDialog />
            <Watermark />
        </div>
    );
}
